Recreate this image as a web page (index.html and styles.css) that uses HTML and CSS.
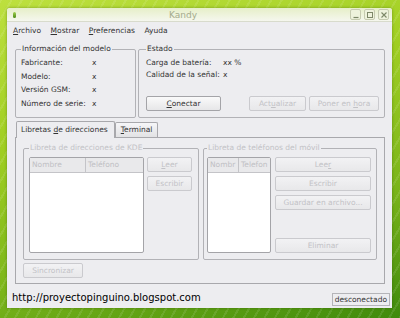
FILE: index.html
```html
<!DOCTYPE html>
<html lang="es">
<head>
    <meta charset="UTF-8">
    <title>Kandy</title>
    <link rel="stylesheet" href="styles.css">
</head>
<body>
    <div class="window">
        <div class="titlebar">
            <span class="app-icon"></span>
            <span class="title">Kandy</span>
            <div class="wm-buttons">
                <span class="wm-btn"><svg width="8" height="8" viewBox="0 0 8 8"><path d="M1.5 6.5h5" stroke="#7d8768" stroke-width="1.2"/></svg></span>
                <span class="wm-btn"><svg width="8" height="8" viewBox="0 0 8 8"><rect x="1.5" y="1.5" width="5" height="5" fill="none" stroke="#7d8768"/></svg></span>
                <span class="wm-btn"><svg width="8" height="8" viewBox="0 0 8 8"><path d="M1.5 1.5l5 5M6.5 1.5l-5 5" stroke="#7d8768" stroke-width="1.1"/></svg></span>
            </div>
        </div>

        <div class="menubar">
            <span><u>A</u>rchivo</span>
            <span><u>M</u>ostrar</span>
            <span><u>P</u>referencias</span>
            <span>Ayuda</span>
        </div>

        <div class="content">
            <div class="top-row">
                <fieldset class="group info">
                    <legend>Información del modelo</legend>
                    <div class="info-grid">
                        <span>Fabricante:</span><span>x</span>
                        <span>Modelo:</span><span>x</span>
                        <span>Versión GSM:</span><span>x</span>
                        <span>Número de serie:</span><span>x</span>
                    </div>
                </fieldset>
                <fieldset class="group estado">
                    <legend>Estado</legend>
                    <div class="estado-grid">
                        <span>Carga de batería:</span><span>xx %</span>
                        <span>Calidad de la señal:</span><span>x</span>
                    </div>
                    <div class="estado-buttons">
                        <button class="btn conectar"><u>C</u>onectar</button>
                        <span class="spacer"></span>
                        <button class="btn actualizar" disabled>Act<u>u</u>alizar</button>
                        <button class="btn hora" disabled>Poner en <u>h</u>ora</button>
                    </div>
                </fieldset>
            </div>

            <div class="tabs">
                <span class="tab active">Libretas <u>d</u>e direcciones</span>
                <span class="tab"><u>T</u>erminal</span>
            </div>
            <div class="tabpanel">
                <div class="books">
                    <fieldset class="group kde" disabled>
                        <legend>Libreta de direcciones de KDE</legend>
                        <div class="book-body">
                            <div class="list kde-list">
                                <div class="list-head"><span class="col-name">Nombre</span><span>Teléfono</span></div>
                            </div>
                            <div class="book-buttons kde-buttons">
                                <button class="btn" disabled><u>L</u>eer</button>
                                <button class="btn" disabled>Escribir</button>
                            </div>
                        </div>
                    </fieldset>
                    <fieldset class="group movil" disabled>
                        <legend>Libreta de teléfonos del móvil</legend>
                        <div class="book-body">
                            <div class="list movil-list">
                                <div class="list-head"><span class="col-name">Nombr</span><span>Telefon</span></div>
                            </div>
                            <div class="book-buttons movil-buttons">
                                <button class="btn" disabled>Lee<u>r</u></button>
                                <button class="btn" disabled>Escribir</button>
                                <button class="btn" disabled>Guardar en archivo...</button>
                                <span class="spacer"></span>
                                <button class="btn" disabled>Eliminar</button>
                            </div>
                        </div>
                    </fieldset>
                </div>
                <button class="btn sync" disabled>Sincronizar</button>
            </div>
        </div>

        <div class="statusbar">
            <span class="url">http://proyectopinguino.blogspot.com</span>
            <span class="status">desconectado</span>
        </div>
    </div>
</body>
</html>
```

FILE: styles.css
```css
body {
    margin: 0;
    width: 400px;
    height: 318px;
    overflow: hidden;
    font-family: "DejaVu Sans", sans-serif;
    font-size: 7.5px;
    color: #333;
    background:
        repeating-linear-gradient(120deg, rgba(255, 255, 255, 0.10) 0 2px, rgba(255, 255, 255, 0) 2px 9px),
        linear-gradient(165deg, #bde03e 0%, #a0ce22 35%, #7ab41a 70%, #3f8a0c 100%);
}

.window {
    margin: 8px 0 0 7px;
    width: 385px;
    height: 300px;
    background: #ededf0;
    border-radius: 3px 3px 0 0;
    box-shadow: 0 0 3px rgba(40, 70, 0, 0.45);
    display: flex;
    flex-direction: column;
}

/* title bar */
.titlebar {
    height: 13px;
    display: flex;
    align-items: center;
    padding: 0 3px 0 6px;
    border-radius: 3px 3px 0 0;
    background: linear-gradient(#e6efc8, #f5f7ee);
    border-bottom: 1px solid #d8dbcc;
}
.app-icon {
    width: 3px;
    height: 6px;
    border-radius: 2px;
    background: linear-gradient(#9fd04c, #4e8a1a);
}
.title {
    flex: 1;
    text-align: center;
    font-size: 9px;
    color: #a4ab8c;
}
.wm-buttons {
    display: flex;
    gap: 3px;
}
.wm-btn {
    width: 9px;
    height: 9px;
    border: 1px solid #c6cbb0;
    border-radius: 2px;
    background: #eef2dc;
    display: flex;
    align-items: center;
    justify-content: center;
}

/* menu */
.menubar {
    height: 16px;
    display: flex;
    align-items: center;
    gap: 9.5px;
    padding-left: 6px;
    font-size: 7.5px;
    color: #333;
}

.content {
    padding: 6px 7px 0 8px;
}

/* group boxes */
.group {
    margin: 0;
    border: 1px solid #b2b2b6;
    border-radius: 2px;
    min-width: 0;
}
.group legend {
    padding: 0 1px;
    line-height: 10px;
    font-size: 7.5px;
    color: #333;
}
.group[disabled] legend {
    color: #c2c2c6;
}

.top-row {
    display: flex;
    gap: 2px;
}
.info {
    width: 121px;
    height: 74px;
    box-sizing: border-box;
    padding: 2px 4px 0 5px;
}
.info-grid {
    display: grid;
    grid-template-columns: 71px auto;
    grid-auto-rows: 13.5px;
    align-items: center;
}
.estado {
    flex: 1;
    height: 74px;
    box-sizing: border-box;
    padding: 2px 5px 6px 7px;
    display: flex;
    flex-direction: column;
}
.estado-grid {
    display: grid;
    grid-template-columns: 77px auto;
    grid-auto-rows: 12px;
    align-items: center;
}
.estado-buttons {
    margin-top: auto;
    display: flex;
    gap: 3px;
}
.spacer {
    flex: 1;
}

/* buttons */
.btn {
    font-family: inherit;
    font-size: 7.5px;
    height: 15px;
    padding: 0;
    border: 1px solid #a4a4a8;
    border-radius: 2px;
    background: linear-gradient(#fafafa, #e6e6e8);
    color: #333;
}
.btn:disabled {
    border-color: #cacace;
    background: linear-gradient(#f2f2f4, #e8e8ea);
    color: #c2c2c6;
}
.conectar { width: 75px; }
.actualizar { width: 57px; }
.hora { width: 70px; }

/* tabs */
.tabs {
    display: flex;
    align-items: flex-end;
    margin-top: 2px;
    padding-left: 1px;
    height: 17px;
}
.tab {
    height: 14px;
    line-height: 14px;
    padding: 0 5px;
    border: 1px solid #a8a8ac;
    border-bottom: none;
    border-radius: 2px 2px 0 0;
    background: linear-gradient(#f6f6f8, #e2e2e4);
    font-size: 7.5px;
    color: #333;
}
.tab.active {
    height: 16px;
    line-height: 16px;
    background: #ededf0;
    margin-bottom: -1px;
    position: relative;
    padding: 0 6px 0 4px;
}
.tabpanel {
    height: 147px;
    border: 1px solid #a8a8ac;
    padding: 5px 6px 0 7px;
    box-sizing: border-box;
}

.books {
    display: flex;
    gap: 4px;
}
.kde {
    width: 176px;
    height: 117px;
    box-sizing: border-box;
    padding: 0 6px 5px 5px;
}
.movil {
    width: 174px;
    height: 117px;
    box-sizing: border-box;
    padding: 0 5px 5px 3px;
}
.book-body {
    display: flex;
    gap: 3px;
    height: 96px;
    margin-top: 4px;
}
.list {
    background: #fff;
    border: 1px solid #a4a4a8;
    border-radius: 2px;
    box-sizing: border-box;
}
.kde-list { width: 115px; }
.movil-list { width: 65px; }
.list-head {
    display: flex;
    height: 14px;
    line-height: 14px;
    background: #e9e9eb;
    border-bottom: 1px solid #c4c4c8;
    color: #c0c0c4;
    white-space: nowrap;
    overflow: hidden;
}
.list-head span {
    padding-left: 2px;
}
.kde-list .col-name {
    width: 53px;
    border-right: 1px solid #c4c4c8;
}
.movil-list .col-name {
    width: 28px;
    border-right: 1px solid #c4c4c8;
    overflow: hidden;
}
.book-buttons {
    display: flex;
    flex-direction: column;
    gap: 4px;
}
.kde-buttons .btn { width: 45px; }
.movil-buttons { padding-left: 1px; }
.movil-buttons .btn { width: 96px; }

.sync {
    width: 60px;
    margin-top: 3px;
}

/* status bar */
.statusbar {
    flex: 1;
    display: flex;
    align-items: center;
    justify-content: space-between;
    padding: 0 2px 0 5px;
}
.url {
    font-size: 10px;
    color: #000;
    margin-top: 2px;
}
.status {
    border: 1px solid #b4b4b8;
    padding: 0 2px;
    height: 11px;
    line-height: 11px;
    font-size: 7.5px;
    color: #333;
    margin-top: 6px;
}
```
